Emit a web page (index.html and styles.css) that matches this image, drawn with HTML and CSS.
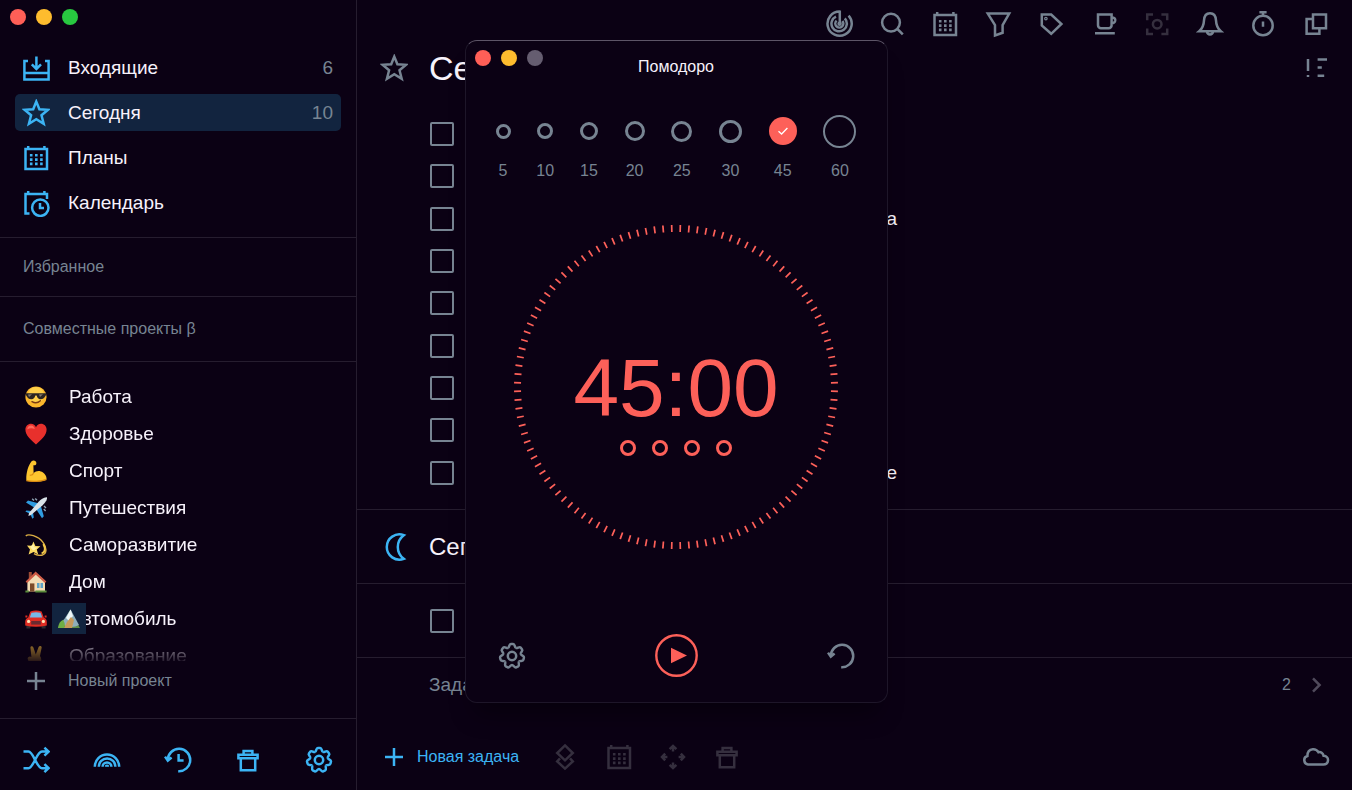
FILE: index.html
```html
<!DOCTYPE html>
<html lang="ru">
<head>
<meta charset="utf-8">
<meta name="viewport" content="width=device-width, initial-scale=1">
<title>Помодоро</title>
<link rel="stylesheet" href="styles.css">
</head>
<body>
<svg class="sprite" aria-hidden="true">
  <defs>
    <path id="tooth" d="M-3.9-8.1C-2.4-8.8-3-12-1.2-12H1.2C3-12 2.4-8.8 3.9-8.1"/>
    <symbol id="i-inbox" viewBox="0 0 28 28"><path d="M6 7H2.4v18.4h24.2V7H23M2.4 19h24.2M14.4 2.5v12.5M9.8 10.4l4.6 4.6 4.6-4.6"/></symbol>
    <symbol id="i-star" viewBox="0 0 28 28"><path d="M14.3 2.6 17.4 10.3 26 10.8 19.5 16.2 21.7 24.8 14.3 20.2 6.9 24.8 9.1 16.2 2.6 10.8 11.2 10.3Z"/></symbol>
    <symbol id="i-calendar" viewBox="0 0 28 28"><path d="M3.5 5H25v20H3.5ZM6.2 2v3M22.4 2v3"/><path class="dots" d="M7.9 11.3h2.6M13 11.3h2.6M18.1 11.3h2.6M7.9 15.6h2.6M13 15.6h2.6M18.1 15.6h2.6M7.9 19.9h2.6M13 19.9h2.6M18.1 19.9h2.6"/></symbol>
    <symbol id="i-calclock" viewBox="0 0 28 28"><path d="M7.5 24.5H3.5V5H25v5M6.2 2v3M22.4 2v3"/><circle cx="18.3" cy="18.7" r="8.2"/><path d="M18 14v5h4"/></symbol>
    <symbol id="i-plus" viewBox="0 0 28 28"><path d="M14 5v18M5 14h18"/></symbol>
    <symbol id="i-shuffle" viewBox="0 0 28 28"><path d="M1.5 5.6H6.5C11.4 5.6 14.6 22.2 20 22.2h6.5M1.5 22.2H6.5C11.4 22.2 14.6 5.6 20 5.6h6.5M22.4 1.6l4.2 4-4.2 4M22.4 18.2l4.2 4-4.2 4"/></symbol>
    <symbol id="i-rainbow" viewBox="0 0 28 28"><path d="M1.8 20.8a12.2 12.2 0 0 1 24.4 0M5.8 20.8a8.3 8.3 0 0 1 16.6 0M9.6 20.8a4.4 4.4 0 0 1 8.8 0M13 20.8a1 1 0 0 1 2 0"/></symbol>
    <symbol id="i-undo" viewBox="0 0 28 28"><path d="M3.8 14A11.2 11.2 0 1 1 14.2 25.2M1 10.6 3.8 14.6 7.6 11.6"/></symbol>
    <symbol id="i-history" viewBox="0 0 28 28"><path d="M3.8 14A11.2 11.2 0 1 1 14.2 25.2M1 10.6 3.8 14.6 7.6 11.6M14.6 8v6.5h5"/></symbol>
    <symbol id="i-trash" viewBox="0 0 28 28"><path d="M4.4 8.8h19.2v3.4H4.4ZM9.6 8.5V5h8.8v3.5M6.8 12.5v11.7h14.4V12.5"/></symbol>
    <symbol id="i-gear" viewBox="0 0 28 28"><g transform="translate(14 14)"><use href="#tooth"/><use href="#tooth" transform="rotate(51.43)"/><use href="#tooth" transform="rotate(102.86)"/><use href="#tooth" transform="rotate(154.29)"/><use href="#tooth" transform="rotate(205.71)"/><use href="#tooth" transform="rotate(257.14)"/><use href="#tooth" transform="rotate(308.57)"/><circle r="4.2"/></g></symbol>
    <symbol id="i-radar" viewBox="0 0 28 28"><path d="M14.8 1.6A12.1 12.1 0 1 0 23.6 5.6M14.8 .6V13.8M11 6.6A7.7 7.7 0 1 0 19.8 8.4M11.6 10.6A4 4 0 1 0 17.4 11"/><circle cx="14.6" cy="13.8" r="1"/></symbol>
    <symbol id="i-search" viewBox="0 0 28 28"><circle cx="13" cy="12.6" r="8.9"/><path d="M19.4 19 24.8 24.4"/></symbol>
    <symbol id="i-filter" viewBox="0 0 28 28"><path d="M3.8 3.6H25.2L18.6 15V22.8L11 25.4V15Z"/></symbol>
    <symbol id="i-tag" viewBox="0 0 28 28"><path d="M4.8 4.6H14.2L24.4 14 14.2 23.8 4.8 15.4Z"/><circle cx="8.9" cy="8.6" r=".6"/></symbol>
    <symbol id="i-cup" viewBox="0 0 28 28"><path d="M8 4.6H21.6V15.2A3 3 0 0 1 18.6 18.2H11A3 3 0 0 1 8 15.2ZM21.8 7.4C24.4 7.4 25.6 9 25.2 10.8 24.8 12.4 23.4 13.4 21.8 13.6M5 23.2H24.8"/></symbol>
    <symbol id="i-focus" viewBox="0 0 28 28"><path d="M4.2 10.2V4.4H10M18.4 4.4H24.2V10.2M24.2 18.4V24H18.4M10 24H4.2V18.4"/><circle cx="14.2" cy="14.2" r="4.3"/></symbol>
    <symbol id="i-bell" viewBox="0 0 28 28"><path d="M14 3.2C9.6 3.2 8.2 6.4 8 10.4 7.8 15 6.6 18.4 3.2 21.2H24.8C21.4 18.4 20.2 15 20 10.4 19.8 6.4 18.4 3.2 14 3.2ZM11 21.6a3 3 0 0 0 6 0"/></symbol>
    <symbol id="i-timer" viewBox="0 0 28 28"><circle cx="14" cy="15.5" r="9.7"/><path d="M10.4 2.2H17.6M14 2.4V5.6M14 11.4V16.8"/></symbol>
    <symbol id="i-copy" viewBox="0 0 28 28"><path d="M11 4.6H24V18.2H11ZM11 9H4.6V23.8H17.4V18.4"/></symbol>
    <symbol id="i-sort" viewBox="0 0 28 28"><path d="M6 5V17M6 21V23M15.6 5.4H25M15.6 13.6H19.8M15.6 21.8H22.2"/></symbol>
    <symbol id="i-moon" viewBox="0 0 28 28"><path d="M23.8 2.2A12.6 12.6 0 1 0 23.8 25.8A14.6 14.6 0 0 1 23.8 2.2Z"/></symbol>
    <symbol id="i-layers" viewBox="0 0 28 28"><path d="M14 2.4 21.8 10 14 17.4 6.2 10ZM9 15.4 6.2 18.4 14 25.6 21.8 18.4 19 15.4"/></symbol>
    <symbol id="i-move" viewBox="0 0 28 28"><path d="M10.6 6.2 14 3 17.4 6.2M14 3.4V8.4M10.6 21.8 14 25 17.4 21.8M14 24.6V19.6M6.2 10.6 3 14 6.2 17.4M3.4 14H8.4M21.8 10.6 25 14 21.8 17.4M24.6 14H19.6"/></symbol>
    <symbol id="i-chevron" viewBox="0 0 28 28"><path d="M11 7.4 17.6 14 11 20.6"/></symbol>
    <symbol id="i-cloud" viewBox="0 0 28 28"><path d="M6 21.4A4.3 4.3 0 0 1 5.4 13C5.4 8.4 8 6.4 10.8 6.2 13.4 6 15.2 7.2 16.4 9.2 18.8 8.6 21 10 21.6 12.8 24.6 13 26.2 15 26 17.4 25.8 20 24.2 21.4 21.6 21.4Z"/></symbol>
  </defs>
</svg>

<div class="app">
  <aside class="sidebar">
    <div class="lights"><i class="light red"></i><i class="light yellow"></i><i class="light green"></i></div>
    <nav class="nav">
      <a class="nav-item" href="#inbox"><svg class="icon"><use href="#i-inbox"/></svg><span>Входящие</span><b class="count">6</b></a>
      <a class="nav-item active" href="#today"><svg class="icon"><use href="#i-star"/></svg><span>Сегодня</span><b class="count">10</b></a>
      <a class="nav-item" href="#plans"><svg class="icon"><use href="#i-calendar"/></svg><span>Планы</span></a>
      <a class="nav-item" href="#calendar"><svg class="icon"><use href="#i-calclock"/></svg><span>Календарь</span></a>
    </nav>
    <h2 class="group">Избранное</h2>
    <h2 class="group shared">Совместные проекты β</h2>
    <ul class="projects">
      <li><a class="project" href="#work"><svg class="emoji" viewBox="0 0 22 22"><circle cx="11" cy="11" r="10.6" fill="#fbb62c"/><circle cx="11" cy="9" r="8" fill="#ffd04a"/><path d="M.8 7.2H21.2V9C20.4 9 20 13.2 16 13.2 13 13.2 12.2 11 11.6 9.4H10.4C9.8 11 9 13.2 6 13.2 2 13.2 1.6 9 .8 9Z" fill="#2b2523"/><path d="M3 8.4 7 8.2 4 11ZM14 8.4 18 8.2 15 11Z" fill="#85786a"/><path d="M7 15.6Q11.4 18.4 15.4 14.8" fill="none" stroke="#7a3a12" stroke-width="1.4" stroke-linecap="round"/></svg><span>Работа</span></a></li>
      <li><a class="project" href="#health"><svg class="emoji" viewBox="0 0 22 22"><path d="M11 21.4C6 17 .4 12.6.4 6.6.4 3 3 .8 6 .8 8.4.8 10.2 2.2 11 4.2 11.8 2.2 13.6.8 16 .8 19 .8 21.6 3 21.6 6.6 21.6 12.6 16 17 11 21.4Z" fill="#e8302c"/><path d="M2.2 6.4C2.4 3.6 4.2 2.4 6.4 2.6 8 2.8 9.2 4 9.8 6 7 4.6 4.4 5 2.2 6.4Z" fill="#ff6a5c"/></svg><span>Здоровье</span></a></li>
      <li><a class="project" href="#sport"><svg class="emoji" viewBox="0 0 22 22"><path d="M6.6 1.2C8.4-.2 11.4.6 11.4 3.2 11.4 5.2 9.4 5.6 8.4 5.2L8.6 13C11 10.4 15 10.2 18 12.4 20.4 14.2 22 17 21.4 19.4 18 21.8 6 22.4 1.4 20.6.8 15 2.6 6 6.6 1.2Z" fill="#fdc52f"/><path d="M8.6 13C8 14.6 6.4 15.4 4.8 15.2M1.4 20.6C7 22 17 21.6 21.4 19.4" fill="none" stroke="#d98a12" stroke-width="1.2"/></svg><span>Спорт</span></a></li>
      <li><a class="project" href="#travel"><svg class="emoji" viewBox="0 0 22 22"><path d="M14 6.4 3 3.6 1 5.4 9.6 10.8ZM15.6 8 18.8 19.2 17 21.2 11.4 12.6ZM6.6 14 1.4 13.4.4 14.6 5 16.8ZM8 15.6 8.8 20.6 7.4 21.8 5.2 17Z" fill="#2f9be0"/><path d="M22 .4C22.4 3 20 6 17.4 8.4L6 18 3.4 19 4 16 13.6 4.8C16 2.4 19 0 22 .4Z" fill="#d9e2e9"/><path d="M7.2 1.8 9 3.6M10.2 1.4 12 3.2M18.8 12 20.6 14M19 9 21 11" stroke="#8ea3b3" stroke-width="1.4"/></svg><span>Путешествия</span></a></li>
      <li><a class="project" href="#growth"><svg class="emoji" viewBox="0 0 22 22"><path d="M.8 2C3-.6 13 1.6 18.2 8.6 22 14 22 19.6 17.4 21 14.4 21.8 11 20.8 9 19.6" fill="none" stroke="#dcae43" stroke-width="1.4"/><path d="M18.4 10C21 15 20 18.6 16.6 19.4" fill="none" stroke="#f2c84b" stroke-width="2"/><path d="M8.4 7.6 10.4 12 15.4 12.2 11.8 15.6 13.2 20.6 8.6 18 3.6 20.4 5 15.4 2 11.6 6.8 11.8Z" fill="#fbd860"/><path d="M8.4 10 9.6 13.2 12.6 13.6 9.8 15.8 8 16.4 5 12.8Z" fill="#fff1a8"/></svg><span>Саморазвитие</span></a></li>
      <li><a class="project" href="#home"><svg class="emoji" viewBox="0 0 22 22"><path d="M3.8 1H6.8V7H3.8Z" fill="#9c4a34"/><path d="M2.4 9.6 11 2 20 9.6V20.6H2.4Z" fill="#f3dcb5"/><path d="M.6 10.4 10.6.4 21.4 10.4 20 12 10.8 3.8 2 12Z" fill="#cd5a45"/><path d="M5 12.4H9.4V20.6H5Z" fill="#7b4a2a"/><path d="M12 12H18V17H12Z" fill="#5ea3c8"/><path d="M15 12V17" stroke="#f3dcb5"/><path d="M.4 19.6H3.8V21.4H.4ZM10.4 19.6H21.6V21.4H10.4Z" fill="#5c8d3c"/></svg><span>Дом</span></a></li>
      <li><a class="project" href="#car"><svg class="emoji" viewBox="0 0 22 22"><path d="M1.4 16H5.4V20.6H1.4ZM16.6 16H20.6V20.6H16.6Z" fill="#2e2a31"/><path d="M3.2 9.4 5.4 3.6Q11 1.6 16.6 3.6L18.8 9.4Q21.8 10.4 21.8 14V17.6Q11 20 .2 17.6V14Q.2 10.4 3.2 9.4Z" fill="#df2c23"/><path d="M4.8 9.4 6.4 4.8Q11 3.6 15.6 4.8L17.2 9.4Z" fill="#76b8e6"/><path d="M6.2 13H15.8V16.6H6.2Z" fill="#6a2a30"/><circle cx="3.6" cy="13.4" r="1.6" fill="#ffe7b8"/><circle cx="18.4" cy="13.4" r="1.6" fill="#ffe7b8"/><path d="M.4 8.6H2.4M19.6 8.6H21.6" stroke="#df2c23" stroke-width="2"/></svg><span>Автомобиль</span></a></li>
      <li><a class="project" href="#education"><svg class="emoji" viewBox="0 0 22 22"><path d="M6.4 12 5.4 2.6Q5.6 1 7 1.2 8.2 1.4 8.6 3L10.8 9.4 13.6 2Q14.4.6 15.6 1 17 1.6 16.6 3L15 11Q18 15 14 21H7Q3 17 2.6 13Q4 10.6 6.4 12Z" fill="#f5bd3a"/></svg><span>Образование</span></a></li>
    </ul>
    <svg class="ghost" viewBox="0 0 34 31" role="img" aria-label="Горы"><path d="M6 25Q9 17 13 16L18 7 28 25Z" fill="#5f8f4a"/><path d="M11 18 18.6 6.6 27 22Q20 26 11 22Z" fill="#8faebb"/><path d="M18.6 6.6 21 13 17 18 14 15Z" fill="#eef6f8"/><path d="M15 19 19 14 22 17 20 25H12Z" fill="#c79a5b"/><path d="M6 25Q7 18 11 17 14 21 12 25Z" fill="#6fae45"/></svg>
    <button class="new-project" type="button"><svg class="icon"><use href="#i-plus"/></svg><span>Новый проект</span></button>
    <div class="side-tools">
      <button type="button" aria-label="Перемешать"><svg class="icon"><use href="#i-shuffle"/></svg></button>
      <button type="button" aria-label="Темы"><svg class="icon"><use href="#i-rainbow"/></svg></button>
      <button type="button" aria-label="История"><svg class="icon"><use href="#i-history"/></svg></button>
      <button type="button" aria-label="Корзина"><svg class="icon"><use href="#i-trash"/></svg></button>
      <button type="button" aria-label="Настройки"><svg class="icon"><use href="#i-gear"/></svg></button>
    </div>
  </aside>

  <main class="main">
    <div class="toolbar">
      <button type="button" aria-label="Фокус"><svg class="icon"><use href="#i-radar"/></svg></button>
      <button type="button" aria-label="Поиск"><svg class="icon"><use href="#i-search"/></svg></button>
      <button type="button" aria-label="Календарь"><svg class="icon"><use href="#i-calendar"/></svg></button>
      <button type="button" aria-label="Фильтр"><svg class="icon"><use href="#i-filter"/></svg></button>
      <button type="button" aria-label="Метки"><svg class="icon"><use href="#i-tag"/></svg></button>
      <button type="button" aria-label="Перерыв"><svg class="icon"><use href="#i-cup"/></svg></button>
      <button type="button" aria-label="Выделение" class="dim" disabled><svg class="icon"><use href="#i-focus"/></svg></button>
      <button type="button" aria-label="Уведомления"><svg class="icon"><use href="#i-bell"/></svg></button>
      <button type="button" aria-label="Таймер"><svg class="icon"><use href="#i-timer"/></svg></button>
      <button type="button" aria-label="Новое окно"><svg class="icon"><use href="#i-copy"/></svg></button>
    </div>
    <header class="heading">
      <svg class="icon"><use href="#i-star"/></svg>
      <h1>Сегодня</h1>
      <button type="button" aria-label="Сортировка"><svg class="icon"><use href="#i-sort"/></svg></button>
    </header>
    <ul class="tasks">
      <li><input type="checkbox" aria-label="Задача 1"></li>
      <li><input type="checkbox" aria-label="Задача 2"></li>
      <li><input type="checkbox" id="t3"><label for="t3">а</label></li>
      <li><input type="checkbox" aria-label="Задача 4"></li>
      <li><input type="checkbox" aria-label="Задача 5"></li>
      <li><input type="checkbox" aria-label="Задача 6"></li>
      <li><input type="checkbox" aria-label="Задача 7"></li>
      <li><input type="checkbox" aria-label="Задача 8"></li>
      <li><input type="checkbox" id="t9"><label for="t9">е</label></li>
    </ul>
    <div class="evening"><svg class="icon"><use href="#i-moon"/></svg><h2>Сегодня вечером</h2></div>
    <div class="evening-task"><input type="checkbox" aria-label="Вечерняя задача"></div>
    <a class="later" href="#later"><span>Задачи</span><span class="later-count">2</span><svg class="icon"><use href="#i-chevron"/></svg></a>
    <footer class="bottom">
      <button class="new-task" type="button"><svg class="icon"><use href="#i-plus"/></svg><span>Новая задача</span></button>
      <button type="button" class="dim" aria-label="Проект" disabled><svg class="icon"><use href="#i-layers"/></svg></button>
      <button type="button" class="dim" aria-label="Дата" disabled><svg class="icon"><use href="#i-calendar"/></svg></button>
      <button type="button" class="dim" aria-label="Переместить" disabled><svg class="icon"><use href="#i-move"/></svg></button>
      <button type="button" class="dim" aria-label="Удалить" disabled><svg class="icon"><use href="#i-trash"/></svg></button>
      <button type="button" class="cloud" aria-label="Синхронизация"><svg class="icon"><use href="#i-cloud"/></svg></button>
    </footer>
  </main>

  <section class="pomodoro" role="dialog" aria-labelledby="pomodoro-title">
    <div class="lights"><i class="light red"></i><i class="light yellow"></i><i class="light off"></i></div>
    <h2 id="pomodoro-title">Помодоро</h2>
    <div class="lengths" role="radiogroup" aria-label="Минуты">
      <label class="length s5"><span class="ring"><input type="radio" name="len"></span>5</label>
      <label class="length s10"><span class="ring"><input type="radio" name="len"></span>10</label>
      <label class="length s15"><span class="ring"><input type="radio" name="len"></span>15</label>
      <label class="length s20"><span class="ring"><input type="radio" name="len"></span>20</label>
      <label class="length s25"><span class="ring"><input type="radio" name="len"></span>25</label>
      <label class="length s30"><span class="ring"><input type="radio" name="len"></span>30</label>
      <label class="length s45"><span class="ring"><input type="radio" name="len" checked><svg class="tick" viewBox="0 0 12 12"><path d="M1.5 6.2 4.6 9 10.4 3"/></svg></span>45</label>
      <label class="length s60"><span class="ring"><input type="radio" name="len"></span>60</label>
    </div>
    <div class="dial">
      <svg class="ticks" viewBox="0 0 324 324" aria-hidden="true"><circle cx="162" cy="162" r="158.5" pathLength="1160"/></svg>
      <time class="clock">45:00</time>
      <div class="rounds"><i></i><i></i><i></i><i></i></div>
    </div>
    <div class="controls">
      <button type="button" aria-label="Настройки таймера"><svg class="icon"><use href="#i-gear"/></svg></button>
      <button type="button" class="play" aria-label="Старт"><svg viewBox="0 0 43 43"><circle cx="21.5" cy="21.5" r="20.2"/><path d="M16 13.8 32 21.5 16 29.2Z"/></svg></button>
      <button type="button" aria-label="Сбросить"><svg class="icon"><use href="#i-undo"/></svg></button>
    </div>
  </section>
</div>
</body>
</html>
```
FILE: styles.css
```css
:root {
  --bg: #0b0114;
  --line: #261d2f;
  --text: #f7f2fb;
  --muted: #778492;
  --dim: #352f3e;
  --blue: #3cb4f4;
  --red: #fd6059;
}

* { box-sizing: border-box; }

body {
  margin: 0;
  background: var(--bg);
  color: var(--text);
  font: 19px/24px "Liberation Sans", Arial, sans-serif;
}

h1, h2 { margin: 0; font-weight: 400; }
ul { margin: 0; padding: 0; list-style: none; }
a { color: inherit; text-decoration: none; }
button {
  display: flex;
  align-items: center;
  padding: 0;
  border: 0;
  background: none;
  color: inherit;
  font: inherit;
}

.sprite { position: absolute; width: 0; height: 0; }

.icon {
  flex: none;
  display: block;
  width: 28px;
  height: 28px;
  fill: none;
  stroke: currentColor;
  stroke-width: 2.5;
}

.dots { stroke-width: 2.6; }

.app { position: relative; display: flex; min-height: 100vh; }

.lights { display: flex; gap: 10px; }
.light { width: 16px; height: 16px; border-radius: 50%; }
.red { background: #ff5f57; }
.yellow { background: #febc2e; }
.green { background: #28c840; }
.off { background: #655d70; }

/* Sidebar */
.sidebar {
  position: relative;
  flex: none;
  display: flex;
  flex-direction: column;
  width: 357px;
  height: 100vh;
  border-right: 1px solid var(--line);
}

.sidebar > .lights { padding: 9px 10px 0; }

.nav {
  display: flex;
  flex-direction: column;
  gap: 8px;
  padding: 24px 15px 16px;
  border-bottom: 1px solid var(--line);
}

.nav-item {
  display: flex;
  align-items: center;
  gap: 18px;
  height: 37px;
  padding: 0 8px 0 7px;
  border-radius: 5px;
}

.nav-item.active { background: #12243f; }
.nav-item .icon { color: var(--blue); }
.count { margin-left: auto; color: var(--muted); font-weight: 400; }

.group {
  padding: 18px 23px;
  border-bottom: 1px solid var(--line);
  color: var(--muted);
  font-size: 16px;
  line-height: 22px;
}

.group.shared { padding: 21px 23px; }

.projects {
  flex: 1;
  min-height: 0;
  overflow: hidden;
  margin-top: 16px;
  -webkit-mask-image: linear-gradient(#000 calc(100% - 32px), #0002);
  mask-image: linear-gradient(#000 calc(100% - 32px), #0002);
}

.project {
  display: flex;
  align-items: center;
  gap: 22px;
  height: 37px;
  padding-left: 25px;
}

.emoji { width: 22px; height: 22px; }

.ghost {
  position: absolute;
  left: 52px;
  bottom: 156px;
  width: 34px;
  height: 31px;
  background: #12243f;
}

.new-project {
  gap: 18px;
  height: 40px;
  margin-bottom: 17px;
  padding-left: 22px;
  color: var(--muted);
  font-size: 16px;
}

.side-tools {
  display: flex;
  justify-content: space-between;
  padding: 27px 23px 16px 22px;
  border-top: 1px solid var(--line);
  color: var(--blue);
}

/* Task list */
.main { flex: 1; display: flex; flex-direction: column; min-width: 0; }

.toolbar {
  display: flex;
  justify-content: flex-end;
  gap: 25px;
  padding: 10px 22px 0;
  color: var(--muted);
}

.dim { color: var(--dim); }

.heading {
  display: flex;
  align-items: center;
  gap: 21px;
  height: 60px;
  padding: 0 22px 0 23px;
  color: var(--muted);
}

.heading h1 { color: var(--text); font-size: 34px; line-height: 40px; }
.heading button { margin-left: auto; }

.tasks {
  display: grid;
  grid-auto-rows: 1fr;
  min-height: 381px;
  margin: 15px 0;
  padding-left: 73px;
}

.tasks li { display: flex; align-items: center; }
.tasks label { width: 443px; text-align: right; }

input { appearance: none; margin: 0; }

input[type="checkbox"] {
  flex: none;
  width: 24px;
  height: 24px;
  border: 2px solid var(--muted);
  border-radius: 2px;
}

.evening, .evening-task, .later { border-top: 1px solid var(--line); }

.evening {
  display: flex;
  align-items: center;
  gap: 21px;
  height: 74px;
  padding-left: 23px;
}

.evening .icon { color: var(--blue); }
.evening h2 { font-size: 24px; line-height: 30px; }

.evening-task {
  display: flex;
  align-items: center;
  height: 74px;
  padding-left: 73px;
}

.later {
  display: flex;
  align-items: center;
  height: 54px;
  padding: 0 22px 0 72px;
  color: var(--muted);
}

.later-count { margin: 0 11px 0 auto; font-size: 16px; }
.later .icon { color: #504a5b; }

.bottom {
  display: flex;
  align-items: center;
  gap: 26px;
  height: 66px;
  margin-top: auto;
  padding: 0 22px 0 23px;
}

.new-task { gap: 9px; margin-right: 6px; color: var(--blue); font-size: 16px; }
.cloud { margin-left: auto; color: var(--muted); }

/* Timer window */
.pomodoro {
  position: absolute;
  top: 40px;
  left: 0;
  right: 0;
  width: 423px;
  margin: 0 auto;
  padding: 9px 30px 25px;
  border: 1px solid #1e1629;
  border-top-color: #5d5567;
  border-radius: 12px;
  background: var(--bg);
  box-shadow: 0 20px 24px -10px #0006;
}

.pomodoro .lights { margin-left: -21px; }

.pomodoro h2 {
  margin-top: -9px;
  font-size: 16px;
  line-height: 20px;
  text-align: center;
}

.lengths { display: flex; justify-content: space-between; margin-top: 37px; }

.length {
  display: flex;
  flex-direction: column;
  align-items: center;
  gap: 11px;
  width: var(--d);
  color: var(--muted);
  font-size: 16px;
}

.ring { position: relative; display: flex; align-items: center; height: 34px; }

.ring input {
  width: var(--d);
  height: var(--d);
  border: 3px solid var(--muted);
  border-radius: 50%;
}

.length .ring input:checked { border: 0; background: var(--red); }

.tick {
  position: absolute;
  inset: 0;
  width: 12px;
  height: 12px;
  margin: auto;
  fill: none;
  stroke: #fff;
  stroke-width: 1.3;
}

.s5 { --d: 15px; }
.s10 { --d: 16px; }
.s15 { --d: 18px; }
.s20 { --d: 20px; }
.s25 { --d: 21px; }
.s30 { --d: 23px; }
.s45 { --d: 28px; }
.s60 { --d: 33px; }
.s60 .ring input { border-width: 2px; }

.dial {
  display: grid;
  justify-items: center;
  align-content: start;
  margin-top: 42px;
}

.ticks, .clock, .rounds { grid-column: 1; grid-row: 1; }

.ticks {
  width: 324px;
  height: 324px;
  fill: none;
  stroke: var(--red);
  stroke-width: 7;
  stroke-dasharray: 2 8;
  stroke-dashoffset: -4;
}

.clock { margin-top: 115px; color: var(--red); font-size: 82px; line-height: 96px; }

.rounds { display: flex; gap: 16px; margin-top: 215px; }
.rounds i { width: 16px; height: 16px; border: 3px solid var(--red); border-radius: 50%; }

.controls {
  display: flex;
  align-items: center;
  justify-content: space-between;
  margin-top: 85px;
  padding: 0 2px;
  color: var(--muted);
}

.play svg { display: block; width: 43px; height: 43px; }
.play circle { fill: none; stroke: var(--red); stroke-width: 2.4; }
.play path { fill: var(--red); }
```
